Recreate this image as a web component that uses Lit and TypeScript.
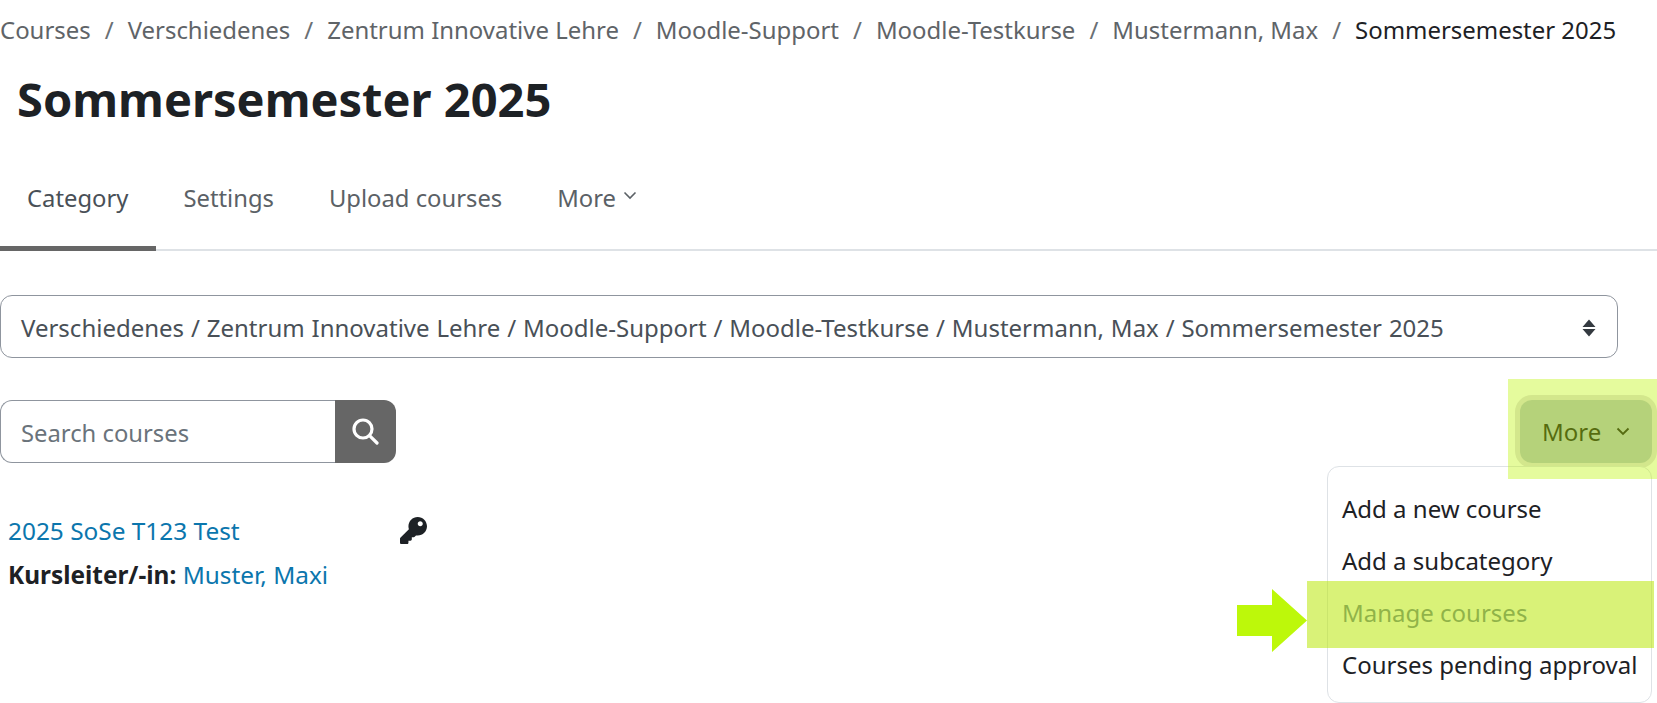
import { LitElement, html, css } from 'lit';
import { customElement } from 'lit/decorators.js';

const crumbs = [
  'Courses',
  'Verschiedenes',
  'Zentrum Innovative Lehre',
  'Moodle-Support',
  'Moodle-Testkurse',
  'Mustermann, Max',
];

const tabs = ['Category', 'Settings', 'Upload courses'];

@customElement('app-root')
export class AppRoot extends LitElement {
  static styles = css`
    :host {
      display: block;
      position: relative;
      width: 1657px;
      height: 703px;
      overflow: hidden;
      background: #fff;
      color: #1d2125;
      font-family: 'Noto Sans', 'Open Sans', sans-serif;
      font-size: 24px;
    }

    .crumbs {
      display: flex;
      align-items: center;
      height: 59px;
      font-size: 23.95px;
      color: #5f6468;
      white-space: nowrap;
    }

    .crumbs .sep {
      padding: 0 14px;
      color: #6a7075;
    }

    .crumbs .current {
      color: #1d2125;
    }

    h1 {
      margin: 0;
      padding-left: 17px;
      height: 81px;
      line-height: 81px;
      font-size: 47px;
      font-weight: 700;
      white-space: nowrap;
    }

    .tabs {
      display: flex;
      height: 111px;
      border-bottom: 2px solid #dee2e6;
      box-sizing: border-box;
      font-size: 23.8px;
    }

    .tab {
      display: flex;
      align-items: center;
      padding: 10px 28px 0 27px;
      color: #5b6166;
      margin-bottom: -2px;
      border-bottom: 5px solid transparent;
    }

    .tab.active {
      color: #495057;
      border-bottom-color: #666;
    }

    .tab svg {
      margin-left: 7px;
      margin-top: -6px;
    }

    .select {
      display: flex;
      align-items: center;
      justify-content: space-between;
      box-sizing: border-box;
      width: 1618px;
      height: 63px;
      margin-top: 44px;
      padding: 2px 21px 0 20px;
      border: 1px solid #8f959e;
      border-radius: 12px;
      color: #495057;
      word-spacing: 0.6px;
    }

    .toolbar {
      display: flex;
      justify-content: space-between;
      margin-top: 42px;
    }

    .search {
      display: flex;
      width: 396px;
      height: 63px;
    }

    .search .input {
      flex: 1;
      display: flex;
      align-items: center;
      padding: 3px 0 0 20px;
      border: 1px solid #8f959e;
      border-right: 0;
      border-radius: 12px 0 0 12px;
      color: #6a737b;
      font-size: 23.8px;
    }

    .search .btn {
      display: flex;
      align-items: center;
      justify-content: center;
      width: 61px;
      background: #666;
      border-radius: 0 12px 12px 0;
    }

    .more {
      display: flex;
      align-items: center;
      gap: 15px;
      box-sizing: border-box;
      width: 132px;
      height: 63px;
      margin-right: 5px;
      padding-left: 22px;
      border-radius: 12px;
      background: #afbbc5;
      box-shadow: 0 0 0 5px #e1dee3;
      color: #0f0f14;
    }

    .course {
      padding: 49px 0 0 8px;
      font-size: 24.4px;
    }

    .course .title {
      display: flex;
      align-items: center;
      height: 36px;
    }

    .course .name {
      width: 392px;
    }

    a {
      color: #0b76ad;
      text-decoration: none;
    }

    .teacher {
      margin-top: 9px;
      line-height: 36px;
    }

    .teacher b {
      font-weight: 700;
    }

    .menu {
      position: absolute;
      left: 1327px;
      top: 466px;
      box-sizing: border-box;
      width: 325px;
      height: 237px;
      padding-top: 16px;
      border: 1px solid #dee2e6;
      border-radius: 12px;
      background: #fff;
    }

    .menu div {
      height: 52px;
      line-height: 52px;
      padding-left: 14px;
      white-space: nowrap;
    }

    .menu .dim {
      color: #5e7398;
    }

    .mark {
      position: absolute;
      background: rgba(190, 245, 10, 0.4);
    }

    .mark.top {
      left: 1508px;
      top: 379px;
      width: 149px;
      height: 100px;
    }

    .mark.row {
      left: 1307px;
      top: 581px;
      width: 347px;
      height: 67px;
      background: rgba(185, 232, 10, 0.55);
    }

    .arrow {
      position: absolute;
      left: 1237px;
      top: 589px;
    }
  `;

  render() {
    return html`
      <nav class="crumbs">
        ${crumbs.map((c) => html`<span>${c}</span><span class="sep">/</span>`)}
        <span class="current">Sommersemester 2025</span>
      </nav>
      <h1>Sommersemester 2025</h1>
      <div class="tabs">
        ${tabs.map(
          (t, i) => html`<div class="tab ${i === 0 ? 'active' : ''}">${t}</div>`
        )}
        <div class="tab">
          More
          <svg width="14" height="9" viewBox="0 0 14 9" fill="none" stroke="#5b6166" stroke-width="1.6">
            <path d="M1.5 1.5 7 7l5.5-5.5" />
          </svg>
        </div>
      </div>
      <div class="select">
        <span>Verschiedenes / Zentrum Innovative Lehre / Moodle-Support / Moodle-Testkurse / Mustermann, Max / Sommersemester 2025</span>
        <svg width="14" height="18" viewBox="0 0 14 18" fill="#343a40">
          <path d="M7 0.5 13.5 8H0.5ZM7 17.5 0.5 10H13.5Z" />
        </svg>
      </div>
      <div class="toolbar">
        <div class="search">
          <div class="input">Search courses</div>
          <div class="btn">
            <svg width="27" height="27" viewBox="0 0 27 27" fill="none" stroke="#fff" stroke-width="3.2" stroke-linecap="round">
              <circle cx="11" cy="11" r="9" />
              <path d="M17.8 17.8 25 25" />
            </svg>
          </div>
        </div>
        <div class="more">
          More
          <svg width="14" height="9" viewBox="0 0 14 9" fill="none" stroke="#0f0f14" stroke-width="1.8">
            <path d="M1.5 1.5 7 7l5.5-5.5" />
          </svg>
        </div>
      </div>
      <div class="course">
        <div class="title">
          <a class="name" href="#">2025 SoSe T123 Test</a>
          <svg width="27" height="27" viewBox="0 0 512 512" fill="#1d2125">
            <path d="M512 176.001C512 273.203 433.202 352 336 352c-11.22 0-22.19-1.062-32.827-3.069l-24.012 27.014A23.999 23.999 0 0 1 261.223 384H224v40c0 13.255-10.745 24-24 24h-40v40c0 13.255-10.745 24-24 24H24c-13.255 0-24-10.745-24-24v-78.059c0-6.365 2.529-12.47 7.029-16.971l161.802-161.802C163.108 213.814 160 195.271 160 176 160 78.798 238.797.001 335.999 0 433.488-.001 512 78.511 512 176.001zM336 128c0 26.51 21.49 48 48 48s48-21.49 48-48-21.49-48-48-48-48 21.49-48 48z" />
          </svg>
        </div>
        <div class="teacher"><b>Kursleiter/-in:</b> <a href="#">Muster, Maxi</a></div>
      </div>
      <div class="menu">
        <div>Add a new course</div>
        <div>Add a subcategory</div>
        <div class="dim">Manage courses</div>
        <div>Courses pending approval</div>
      </div>
      <div class="mark top"></div>
      <div class="mark row"></div>
      <svg class="arrow" width="70" height="63" viewBox="0 0 70 63" fill="#bdf80a">
        <path d="M0 16H35V0L70 31.5 35 63V47H0Z" />
      </svg>
    `;
  }
}
